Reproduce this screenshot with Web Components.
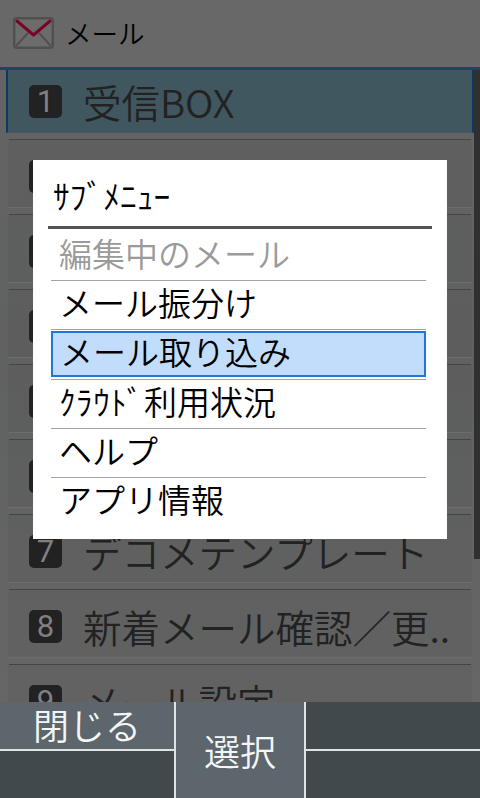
<!DOCTYPE html>
<html lang="ja">
<head>
<meta charset="utf-8">
<title>メール</title>
<style>
  html, body { margin: 0; height: 100%; background: #666; }
  body { font-family: "Noto Sans CJK JP", "Noto Sans", sans-serif; font-weight: 350; overflow: hidden; }
</style>
</head>
<body>
<mail-screen>
  <mail-header slot="header">メール</mail-header>
  <menu-row slot="list" num="1" selected>受信BOX</menu-row>
  <menu-row slot="list" num="2">送信BOX</menu-row>
  <menu-row slot="list" num="3">未送信BOX</menu-row>
  <menu-row slot="list" num="4">メール作成</menu-row>
  <menu-row slot="list" num="5">メール検索</menu-row>
  <menu-row slot="list" num="6">フォルダ</menu-row>
  <menu-row slot="list" num="7">デコメテンプレート</menu-row>
  <menu-row slot="list" num="8">新着メール確認／更..</menu-row>
  <menu-row slot="list" num="9">メール設定</menu-row>
  <soft-keys slot="footer"></soft-keys>
  <sub-menu slot="dialog" heading="ｻﾌﾞﾒﾆｭｰ">
    <sub-item disabled>編集中のメール</sub-item>
    <sub-item>メール振分け</sub-item>
    <sub-item selected>メール取り込み</sub-item>
    <sub-item><span style="letter-spacing:.6px">ｸﾗｳﾄﾞ</span>利用状況</sub-item>
    <sub-item>ヘルプ</sub-item>
    <sub-item last>アプリ情報</sub-item>
  </sub-menu>
</mail-screen>

<script>
class MailScreen extends HTMLElement {
  constructor() {
    super();
    this.attachShadow({ mode: "open" });
    this.shadowRoot.innerHTML = `
      <style>
        :host { display: flex; flex-direction: column; position: relative; width: 480px; height: 798px; overflow: hidden; }
        .list { flex: 1; min-height: 0; overflow: hidden; position: relative; background: linear-gradient(#646464, #606161 45%, #666666); }
        .bar { position: absolute; top: 0; right: 0; width: 6px; height: 489px; background: #303030; }
        .dialog { position: absolute; left: 33px; top: 160px; }
      </style>
      <slot name="header"></slot>
      <div class="list"><slot name="list"></slot><div class="bar"></div></div>
      <slot name="footer"></slot>
      <div class="dialog"><slot name="dialog"></slot></div>
    `;
  }
}

class MailHeader extends HTMLElement {
  constructor() {
    super();
    this.attachShadow({ mode: "open" });
    this.shadowRoot.innerHTML = `
      <style>
        :host { display: flex; align-items: center; gap: 11px; height: 70px; padding: 0 0 2px 13px; box-sizing: border-box; background: #686868; border-bottom: 3px solid #14495f; color: #000; font-size: 26.5px; }
        svg { width: 41px; height: 32px; display: block; }
      </style>
      <svg viewBox="0 0 41 32">
        <rect x="1.2" y="1.2" width="38.6" height="29.6" rx="2.5" fill="#6c6c6c" stroke="#505050" stroke-width="2.4"/>
        <path d="M3 29 L15 16 M38 29 L26 16" fill="none" stroke="#505050" stroke-width="2"/>
        <path d="M4 4 L20.500 18 L37 4" fill="none" stroke="#7a0426" stroke-width="3" stroke-linecap="round" stroke-linejoin="round"/>
      </svg>
      <span><slot></slot></span>
    `;
  }
}

class MenuRow extends HTMLElement {
  constructor() {
    super();
    this.attachShadow({ mode: "open" });
    this.shadowRoot.innerHTML = `
      <style>
        :host { display: block; height: 75px; box-sizing: border-box; padding: 0 6px 0 8px; }
        :host([selected]) { height: 70px; padding: 0 6px 0 6px; }
        .inner { display: flex; align-items: center; height: 68px; margin-right: 2px; padding: 5px 0 0 21px; box-sizing: border-box; background: rgba(0,0,0,.03); color: #222; font-size: 38.5px; white-space: nowrap; border-bottom: 1px solid #6d6d6d; }
        :host([selected]) .inner { height: 63px; margin-right: 0; padding: 0 0 0 21px; background: #41575f; border: solid #0f3a5e; border-width: 0 2px; border-bottom: 1px solid #4a5659; }
        .num { width: 33px; height: 33px; margin-right: 21px; border-radius: 5px; background: #222; color: #808080; font: 400 31px/33px Roboto, sans-serif; text-align: center; flex: none; }
        .rule { height: 1px; margin: 6px 3px 0 1px; background: #454545; }
        :host([selected]) .rule { margin-left: 3px; }
      </style>
      <div class="inner"><span class="num">${this.getAttribute("num")}</span><span><slot></slot></span></div>
      <div class="rule"></div>
    `;
  }
}

class SoftKeys extends HTMLElement {
  constructor() {
    super();
    this.attachShadow({ mode: "open" });
    this.shadowRoot.innerHTML = `
      <style>
        :host { display: grid; grid-template-columns: 174px 2px 128px 2px 1fr; grid-template-rows: 47px 2px 47px; height: 96px; background: #42494c; color: #f4f6f6; font-size: 36px; }
        .close { grid-column: 1; grid-row: 1; display: flex; align-items: center; justify-content: center; padding-bottom: 3px; box-sizing: border-box; background: #5d666d; }
        .hline { background: #dfe3e4; }
        .h1 { grid-column: 1; grid-row: 2; }
        .h2 { grid-column: 5; grid-row: 2; }
        .vline { grid-row: 1 / 4; background: #dfe3e4; }
        .v1 { grid-column: 2; }
        .v2 { grid-column: 4; }
        .select { grid-column: 3; grid-row: 1 / 4; display: flex; align-items: center; justify-content: center; background: #5d666d; }
      </style>
      <div class="close">閉じる</div>
      <div class="hline h1"></div>
      <div class="vline v1"></div>
      <div class="select">選択</div>
      <div class="vline v2"></div>
      <div class="hline h2"></div>
    `;
  }
}

class SubMenu extends HTMLElement {
  constructor() {
    super();
    this.attachShadow({ mode: "open" });
    this.shadowRoot.innerHTML = `
      <style>
        :host { display: block; width: 414px; height: 379px; box-sizing: border-box; padding: 0 15px; background: #fff; color: #000; }
        .title { height: 69px; display: flex; align-items: center; padding: 2px 0 0 5px; box-sizing: border-box; font-size: 33.5px; border-bottom: 3px solid #555; }
        .items { padding: 3px 6px 0 3px; }
      </style>
      <div class="title">${this.getAttribute("heading")}</div>
      <div class="items"><slot></slot></div>
    `;
  }
}

class SubItem extends HTMLElement {
  constructor() {
    super();
    this.attachShadow({ mode: "open" });
    this.shadowRoot.innerHTML = `
      <style>
        :host { display: block; height: 49px; box-sizing: border-box; border-bottom: 1px solid #a3a3a3; font-size: 33px; }
        :host([last]) { border-bottom: 0; }
        :host([disabled]) { color: #9a9a9a; }
        .text { display: flex; align-items: center; height: 100%; padding: 0 0 7px 8px; box-sizing: border-box; }
        :host([selected]) .text { height: 46px; margin-top: 1px; background: #c2dcfb; border: 2px solid #2176d8; padding: 0 0 6px 7px; }
      </style>
      <div class="text"><span><slot></slot></span></div>
    `;
  }
}

customElements.define("mail-screen", MailScreen);
customElements.define("mail-header", MailHeader);
customElements.define("menu-row", MenuRow);
customElements.define("soft-keys", SoftKeys);
customElements.define("sub-menu", SubMenu);
customElements.define("sub-item", SubItem);
</script>
</body>
</html>
